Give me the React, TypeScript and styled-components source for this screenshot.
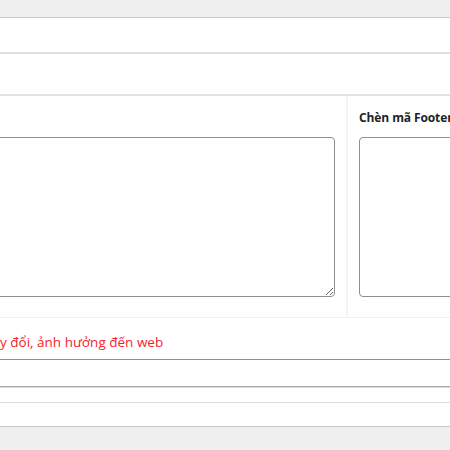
import React from "react";
import styled, { createGlobalStyle } from "styled-components";

const Global = createGlobalStyle`
  html, body { margin: 0; padding: 0; }
  body {
    background: #f0f0f1;
    overflow: hidden;
    width: 450px;
    height: 450px;
    font-family: "Open Sans", "Noto Sans", sans-serif;
    color: #1d2327;
  }
`;

const Wrap = styled.div`
  margin-left: -300px;
  width: 1000px;
  padding-top: 17px;
`;

const Panel = styled.div`
  background: #fff;
  border-top: 1px solid #c8c8ca;
  border-bottom: 1px solid #c8c8ca;
`;

const Row = styled.div<{ $h: number; $line?: string; $thick?: number }>`
  height: ${(p) => p.$h}px;
  border-bottom: ${(p) => p.$thick ?? 1}px solid ${(p) => p.$line ?? "#dcdcde"};
`;

const Columns = styled.div`
  display: flex;
  border-bottom: 1px solid #f0f0f1;
`;

const Col = styled.div<{ $w?: number; $pl: number; $pr: number }>`
  ${(p) => (p.$w ? `width: ${p.$w}px; flex: none;` : "flex: 1;")}
  padding: 0 ${(p) => p.$pr}px 20px ${(p) => p.$pl}px;
  box-sizing: border-box;
`;

const Divider = styled.div`
  width: 2px;
  background: #f4f4f4;
  flex: none;
`;

const Heading = styled.div`
  height: 41px;
  padding-top: 13px;
  box-sizing: border-box;
  font-size: 12px;
  font-weight: 700;
  line-height: 18px;
  letter-spacing: -0.1px;
  white-space: nowrap;
`;

const Area = styled.textarea<{ $resize?: boolean }>`
  display: block;
  width: 100%;
  height: 160px;
  box-sizing: border-box;
  border: 1px solid #8c8f94;
  border-radius: 4px;
  background: #fff;
  margin: 0;
  resize: ${(p) => (p.$resize ? "both" : "none")};
  font-family: inherit;
`;

const Notice = styled.div`
  height: 41px;
  display: flex;
  align-items: center;
  padding-left: 300px;
  padding-top: 6px;
  box-sizing: border-box;
  color: #f5222d;
  font-size: 13.5px;
  white-space: nowrap;
`;

const InputRow = styled.div`
  height: 28px;
  border-top: 1px solid #8c8f94;
  border-bottom: 1px solid #a7aaad;
  box-sizing: border-box;
`;

const Sep = styled.div<{ $h: number }>`
  height: ${(p) => p.$h}px;
  border-top: 1px solid #dcdcde;
  box-sizing: border-box;
`;

export default function App() {
  return (
    <>
      <Global />
      <Wrap>
        <Panel>
          <Row $h={34} $thick={2} $line="#e0e0e0" />
          <Row $h={40} $thick={2} $line="#e2e2e4" />
          <Columns>
            <Col $w={646} $pl={20} $pr={11}>
              <Heading />
              <Area $resize />
            </Col>
            <Divider />
            <Col $pl={11} $pr={20}>
              <Heading>Chèn mã Footer</Heading>
              <Area />
            </Col>
          </Columns>
          <Notice>y đổi, ảnh hưởng đến web</Notice>
          <InputRow />
          <Sep $h={15} />
          <Sep $h={24} />
        </Panel>
      </Wrap>
    </>
  );
}
